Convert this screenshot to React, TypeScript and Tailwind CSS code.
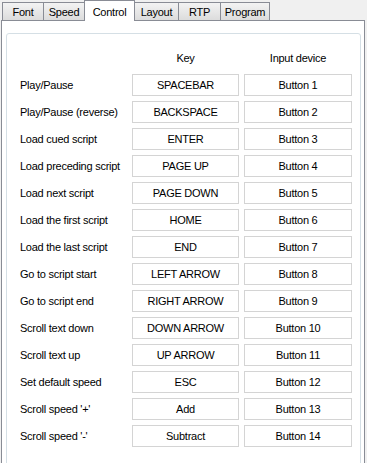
const tabs = [
  { name: "Font", w: "w-[42px]" },
  { name: "Speed", w: "w-[42px]" },
  { name: "Control", w: "w-[51px]", active: true },
  { name: "Layout", w: "w-[45px]" },
  { name: "RTP", w: "w-[43px]" },
  { name: "Program", w: "w-[50px]" },
];

const rows: [string, string, string][] = [
  ["Play/Pause", "SPACEBAR", "Button 1"],
  ["Play/Pause (reverse)", "BACKSPACE", "Button 2"],
  ["Load cued script", "ENTER", "Button 3"],
  ["Load preceding script", "PAGE UP", "Button 4"],
  ["Load next script", "PAGE DOWN", "Button 5"],
  ["Load the first script", "HOME", "Button 6"],
  ["Load the last script", "END", "Button 7"],
  ["Go to script start", "LEFT ARROW", "Button 8"],
  ["Go to script end", "RIGHT ARROW", "Button 9"],
  ["Scroll text down", "DOWN ARROW", "Button 10"],
  ["Scroll text up", "UP ARROW", "Button 11"],
  ["Set default speed", "ESC", "Button 12"],
  ["Scroll speed '+'", "Add", "Button 13"],
  ["Scroll speed '-'", "Subtract", "Button 14"],
];

function KeyBox({ text }: { text: string }) {
  return (
    <div className="h-[22px] border border-[#d4d4d4] bg-white flex items-center justify-center">
      {text}
    </div>
  );
}

export default function App() {
  return (
    <div
      className="w-[367px] h-[463px] overflow-hidden bg-[#f0f0f0] text-[11px] tracking-[-0.25px] text-black"
      style={{ fontFamily: '"Liberation Sans", Arial, sans-serif' }}
    >
      {/* Tab strip */}
      <div className="h-[20px] flex items-end pl-[2px]">
        {tabs.map((t, i) =>
          t.active ? (
            <div
              key={t.name}
              className={`${t.w} -ml-px h-[21px] -mb-px relative z-10 bg-white border border-b-0 border-[#898c95] flex items-start justify-center pt-[3px]`}
            >
              {t.name}
            </div>
          ) : (
            <div
              key={t.name}
              className={`${t.w} ${i === 0 ? "" : "-ml-px"} h-[18px] border border-b-0 border-[#898c95] bg-gradient-to-b from-[#f3f3f3] to-[#dcdcdc] flex items-center justify-center pt-px`}
            >
              {t.name}
            </div>
          )
        )}
      </div>

      {/* Tab panel */}
      <div className="ml-px w-[364px] h-[460px] border border-[#898c95] bg-white pt-[12px] pl-[4px]">
        <div className="w-[355px] h-[440px] border border-[#d5dfe5] rounded-[3px] pt-[13px] pl-[13px]">
          <div className="grid grid-cols-[107px_107px_108px] gap-x-[5px] gap-y-[5px]">
            <div className="h-[22px]" />
            <div className="h-[22px] flex items-center justify-center">Key</div>
            <div className="h-[22px] flex items-center justify-center">Input device</div>
            {rows.map(([label, key, btn]) => (
              <div key={label} className="contents">
                <div className="h-[22px] flex items-center whitespace-nowrap">{label}</div>
                <KeyBox text={key} />
                <KeyBox text={btn} />
              </div>
            ))}
          </div>
        </div>
      </div>
    </div>
  );
}
